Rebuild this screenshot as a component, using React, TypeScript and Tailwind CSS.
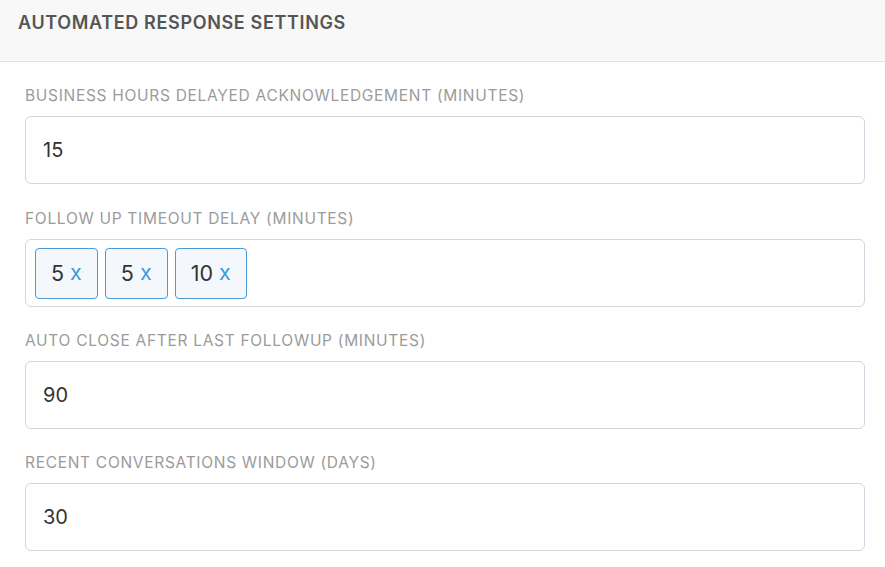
import { useState } from "react";

type Field = {
  label: string;
  value: string;
};

const fields: Field[] = [
  { label: "Business Hours Delayed Acknowledgement (Minutes)", value: "15" },
  { label: "Auto Close After Last Followup (Minutes)", value: "90" },
  { label: "Recent Conversations Window (Days)", value: "30" },
];

function FieldLabel({ children }: { children: string }) {
  return (
    <div className="h-5 text-[15.5px] leading-5 uppercase tracking-[0.7px] text-[#9b9b9b] mb-[10px]">
      {children}
    </div>
  );
}

function TextField({ label, value }: Field) {
  return (
    <div className="pt-[24px]">
      <FieldLabel>{label}</FieldLabel>
      <div className="h-[68px] rounded-md border border-[#d3d6de] bg-white flex items-center px-[17px]">
        <span className="text-[20px] text-[#333333]">{value}</span>
      </div>
    </div>
  );
}

function TagField() {
  const [tags, setTags] = useState(["5", "5", "10"]);
  return (
    <div className="pt-[25px]">
      <FieldLabel>Follow Up Timeout Delay (Minutes)</FieldLabel>
      <div className="h-[68px] rounded-md border border-[#d3d6de] bg-white flex items-center gap-[7px] px-[9px]">
        {tags.map((t, i) => (
          <span
            key={`${t}-${i}`}
            className="h-[51px] flex items-center gap-[6px] rounded border border-[#4a9bd6] bg-[#f4f8fd] pl-[15px] pr-[15px] text-[21.5px] text-[#333333]"
          >
            {t}
            <button
              className="text-[#3d9bdb] leading-none"
              onClick={() => setTags(tags.filter((_, j) => j !== i))}
            >
              x
            </button>
          </span>
        ))}
      </div>
    </div>
  );
}

export default function App() {
  return (
    <div className="min-h-screen bg-white font-['Inter',sans-serif]">
      <div className="h-[62px] bg-[#f8f8f8] border-b border-[#e3e3e3] px-[18px] pt-[13px]">
        <h2 className="text-[18px] leading-5 font-semibold tracking-[0.65px] text-[#555555]">
          AUTOMATED RESPONSE SETTINGS
        </h2>
      </div>
      <div className="pl-[25px] pr-[20px]">
        <TextField {...fields[0]} />
        <TagField />
        <TextField {...fields[1]} />
        <TextField {...fields[2]} />
      </div>
    </div>
  );
}
